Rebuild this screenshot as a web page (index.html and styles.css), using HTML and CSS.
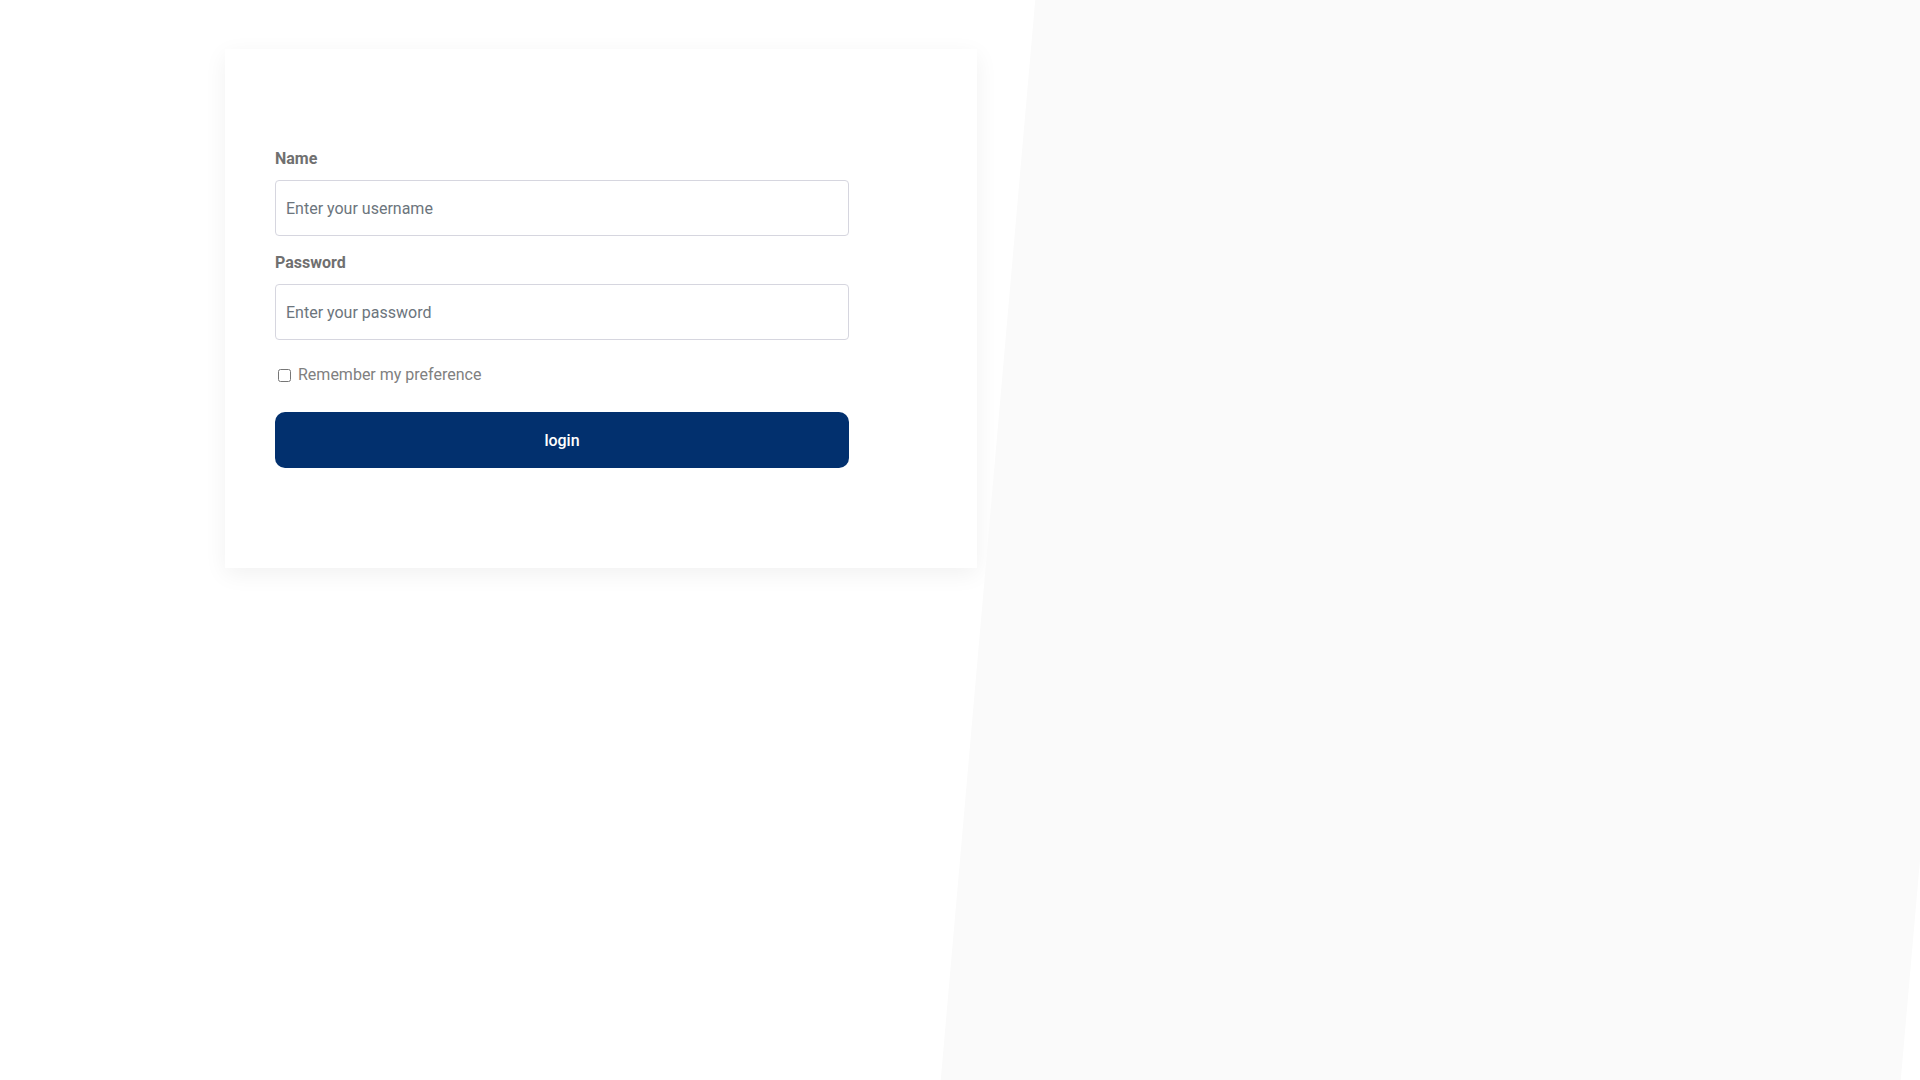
FILE: index.html
```html
<!DOCTYPE html>
<html lang="en">
<head>
<meta charset="utf-8">
<title>Login</title>
<link rel="stylesheet" href="styles.css">
</head>
<body>
<div class="page">
  <section class="left">
    <div class="card">
      <form class="login-form">
        <label class="field-label" for="username">Name</label>
        <input class="field-input" id="username" type="text" placeholder="Enter your username">
        <label class="field-label" for="password">Password</label>
        <input class="field-input" id="password" type="password" placeholder="Enter your password">
        <div class="remember">
          <input class="remember-check" id="remember" type="checkbox">
          <label class="remember-label" for="remember">Remember my preference</label>
        </div>
        <button class="login-btn" type="button">login</button>
      </form>
    </div>
  </section>
  <section class="right"></section>
</div>
</body>
</html>
```
FILE: styles.css
```css
html, body {
  height: 100%;
}
::-webkit-scrollbar {
  height: 15px;
  width: 15px;
}
::-webkit-scrollbar-track {
  background: #f1f1f1;
}
::-webkit-scrollbar-thumb {
  background: #c1c1c1;
  border: 2px solid #f1f1f1;
  border-left-width: 12px;
}
body {
  margin: 0;
  background: #ffffff;
  font-family: Roboto, "Liberation Sans", Arial, sans-serif;
}
.page {
  display: flex;
  height: 100%;
}
.left {
  flex: 0 0 988px;
  width: 988px;
}
.right {
  flex: 0 0 960px;
  width: 960px;
  height: 100%;
  background: #fafafa;
  transform: skewX(-5deg);
}
.card {
  margin: 49px 0 0 225px;
  width: 752px;
  box-sizing: border-box;
  padding: 99px 128px 100px 50px;
  background: #ffffff;
  box-shadow: 0 6px 22px rgba(0, 0, 0, 0.06);
}
.login-form {
  display: flex;
  flex-direction: column;
}
.field-label {
  font-size: 16px;
  font-weight: 700;
  line-height: 22px;
  color: #707070;
  margin-bottom: 10px;
}
.field-input {
  height: 56px;
  box-sizing: border-box;
  border: 1px solid #d6d6df;
  border-radius: 4px;
  padding: 0 10px;
  font-family: Roboto, "Liberation Sans", Arial, sans-serif;
  font-size: 16px;
  color: #495057;
  margin: 0 0 16px 0;
  outline: none;
}
.field-input::placeholder {
  color: #6c757d;
}
.remember {
  display: flex;
  align-items: center;
  margin: 7px 0 25px 0;
  height: 24px;
}
.remember-check {
  width: 13px;
  height: 13px;
  margin: 0 7px 0 3px;
}
.remember-label {
  font-size: 16px;
  color: #808080;
  line-height: 24px;
}
.login-btn {
  height: 56px;
  border: none;
  border-radius: 10px;
  background: #02306e;
  color: #ffffff;
  font-family: Roboto, "Liberation Sans", Arial, sans-serif;
  font-size: 16px;
  font-weight: 500;
  cursor: pointer;
}
```
